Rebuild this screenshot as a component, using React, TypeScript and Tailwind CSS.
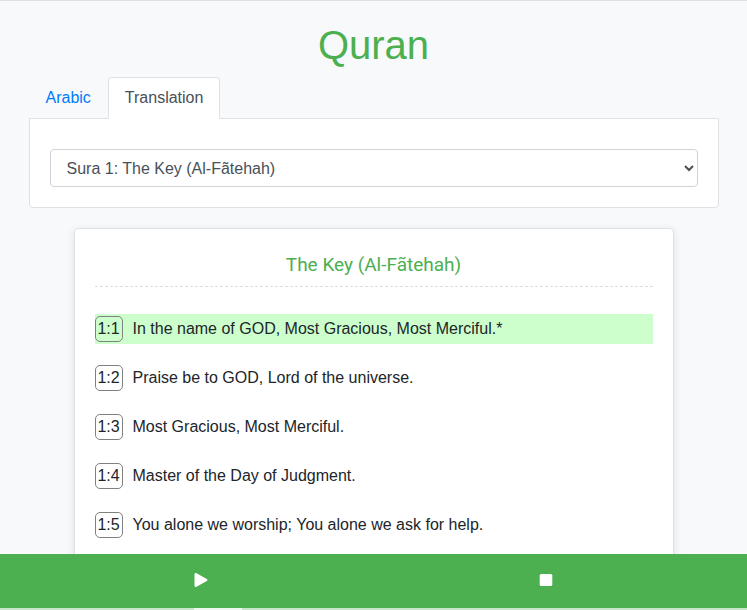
import { useState } from "react";

const verses = [
  { id: "1:1", text: "In the name of GOD, Most Gracious, Most Merciful.*" },
  { id: "1:2", text: "Praise be to GOD, Lord of the universe." },
  { id: "1:3", text: "Most Gracious, Most Merciful." },
  { id: "1:4", text: "Master of the Day of Judgment." },
  { id: "1:5", text: "You alone we worship; You alone we ask for help." },
];

function SuraPicker() {
  const [sura, setSura] = useState("1");
  return (
    <section className="rounded-b border border-[#dee2e6] bg-white px-5 pt-[30px] pb-5">
      <select
        aria-label="Sura"
        value={sura}
        onChange={(e) => setSura(e.target.value)}
        className="block h-[38px] w-full rounded border border-[#ced4da] bg-white px-3 text-base text-[#495057]"
      >
        <option value="1">Sura 1: The Key (Al-Fãtehah)</option>
      </select>
    </section>
  );
}

function Verses() {
  return (
    <article className="mx-auto mt-5 max-w-[600px] rounded border border-[#dee2e6] bg-white p-5 shadow-[0_2px_8px_rgba(0,0,0,0.1)]">
      <h2 className="border-b border-dashed border-[#dddddd] pt-1 pb-[9px] text-center font-['Roboto',sans-serif] text-[19px] leading-6 text-[#4caf50]">
        The Key (Al-Fãtehah)
      </h2>
      <ol className="mt-[27px] flex flex-col gap-[19px]">
        {verses.map((verse, i) => (
          <li
            key={verse.id}
            className={
              i === 0
                ? "flex min-h-[30px] items-center gap-2.5 bg-[#ccffcc]"
                : "flex min-h-[30px] items-center gap-2.5"
            }
          >
            <span className="flex h-[26px] w-7 shrink-0 items-center justify-center rounded-[5px] border border-[#808080]">
              {verse.id}
            </span>
            <span>{verse.text}</span>
          </li>
        ))}
      </ol>
    </article>
  );
}

function Player() {
  return (
    <footer className="shrink-0">
      <div className="flex h-[54px] justify-around bg-[#4caf50] px-7 pb-0.5 text-white">
        <button type="button" aria-label="Play" className="flex w-12 items-center justify-center">
          <svg viewBox="0 0 14 14" className="size-3.5" fill="currentColor" aria-hidden="true">
            <path d="M.5 1.2C.5.1 1.6-.3 2.5.2l10.3 5.7c.9.5.9 1.7 0 2.2L2.5 13.8c-.9.5-2 .1-2-1Z" />
          </svg>
        </button>
        <button type="button" aria-label="Stop" className="flex w-12 items-center justify-center">
          <svg viewBox="0 0 14 14" className="size-3.5" fill="currentColor" aria-hidden="true">
            <rect x=".7" y="1" width="12.6" height="12" rx="1.5" />
          </svg>
        </button>
      </div>
      <div className="flex h-0.5 bg-[#c8e6c9]">
        <div className="ml-[26%] w-12 bg-[#eef7ee]" />
      </div>
    </footer>
  );
}

export default function App() {
  return (
    <div className="flex h-screen flex-col border-t border-[#e0e0dc] bg-[#f8f9fa] font-['Liberation_Sans',Arial,sans-serif] text-base text-[#212529]">
      <main className="min-h-0 flex-1 overflow-y-auto px-5 pt-5 [scrollbar-width:none]">
        <div className="mx-auto max-w-[690px]">
          <h1 className="mb-2 text-center text-[40px] leading-[48px] text-[#4caf50]">Quran</h1>
          <nav className="relative z-10 -mb-px flex">
            <a href="#arabic" className="rounded-t border border-transparent px-4 py-2 text-[#007bff]">
              Arabic
            </a>
            <a
              href="#translation"
              aria-current="page"
              className="rounded-t border border-[#dee2e6] border-b-white bg-white px-4 py-2 text-[#495057]"
            >
              Translation
            </a>
          </nav>
          <SuraPicker />
          <Verses />
        </div>
      </main>
      <Player />
    </div>
  );
}
